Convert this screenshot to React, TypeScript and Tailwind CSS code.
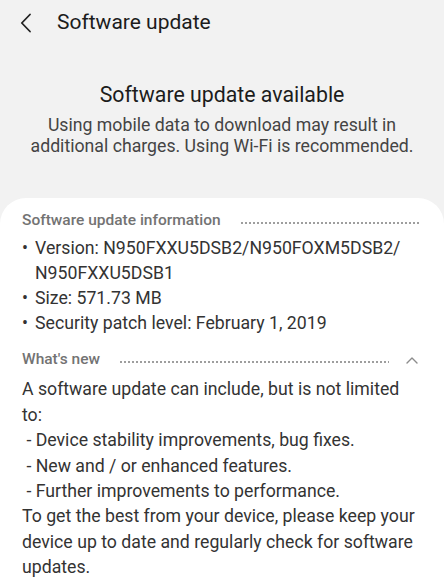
const font = { fontFamily: 'Roboto, "Noto Sans", sans-serif' };

function SectionHeader({ title, chevron }: { title: string; chevron?: boolean }) {
  return (
    <div className="flex items-center h-[24px]">
      <span className="text-[15.5px] font-medium text-[#737373] whitespace-nowrap">{title}</span>
      <div className="flex-1 ml-[19px] h-[2px] mt-[3px] bg-[radial-gradient(circle,#9e9e9e_0.75px,transparent_0.95px)] bg-[length:4px_2px] bg-repeat-x" />
      {chevron ? (
        <svg className="ml-[17px] mr-[4px] mt-[-1px]" width="12" height="8" viewBox="0 0 12 8" fill="none">
          <path d="M1 7 L6 2 L11 7" stroke="#8c8c8c" strokeWidth="1.4" strokeLinecap="round" strokeLinejoin="round" />
        </svg>
      ) : (
        <div className="w-[1px]" />
      )}
    </div>
  );
}

export default function App() {
  return (
    <div className="w-[444px] h-[585px] overflow-hidden bg-[#f2f2f2] text-[#2b2b2b] pt-[2px]" style={font}>
      {/* Top bar */}
      <div className="flex items-center h-[42px] pl-[20px]">
        <svg width="12" height="20" viewBox="0 0 12 20" fill="none">
          <path d="M10 1.5 L1.8 10 L10 18.5" stroke="#222" strokeWidth="1.8" strokeLinecap="round" strokeLinejoin="round" />
        </svg>
        <h1 className="ml-[25px] text-[21px] text-[#1c1c1c]">Software update</h1>
      </div>

      {/* Status */}
      <div className="flex flex-col items-center pt-[37px] text-center">
        <h2 className="text-[21.3px] text-[#1c1c1c] leading-[28px]">Software update available</h2>
        <p className="mt-[5.5px] text-[17.7px] leading-[21px] text-[#444]">
          Using mobile data to download may result in
          <br />
          additional charges. Using Wi-Fi is recommended.
        </p>
      </div>

      {/* Card */}
      <div className="mt-[41.5px] bg-white rounded-t-[26px] px-[22px] pt-[11px] pb-6">
        <SectionHeader title="Software update information" />
        <ul className="mt-[2.5px] text-[17.7px] leading-[25px] text-[#333]">
          <li className="flex">
            <span className="w-[13px] shrink-0">•</span>
            <span>
              Version: N950FXXU5DSB2/N950FOXM5DSB2/
              <br />
              N950FXXU5DSB1
            </span>
          </li>
          <li className="flex">
            <span className="w-[13px] shrink-0">•</span>
            <span>Size: 571.73 MB</span>
          </li>
          <li className="flex">
            <span className="w-[13px] shrink-0">•</span>
            <span>Security patch level: February 1, 2019</span>
          </li>
        </ul>

        <div className="mt-[12.5px]">
          <SectionHeader title="What's new" chevron />
        </div>
        <p className="mt-[5.3px] text-[17.7px] leading-[25.4px] text-[#333] whitespace-nowrap">
          A software update can include, but is not limited
          <br />
          to:
          <br />
          &nbsp;- Device stability improvements, bug fixes.
          <br />
          &nbsp;- New and / or enhanced features.
          <br />
          &nbsp;- Further improvements to performance.
          <br />
          To get the best from your device, please keep your
          <br />
          device up to date and regularly check for software
          <br />
          updates.
        </p>
      </div>
    </div>
  );
}
